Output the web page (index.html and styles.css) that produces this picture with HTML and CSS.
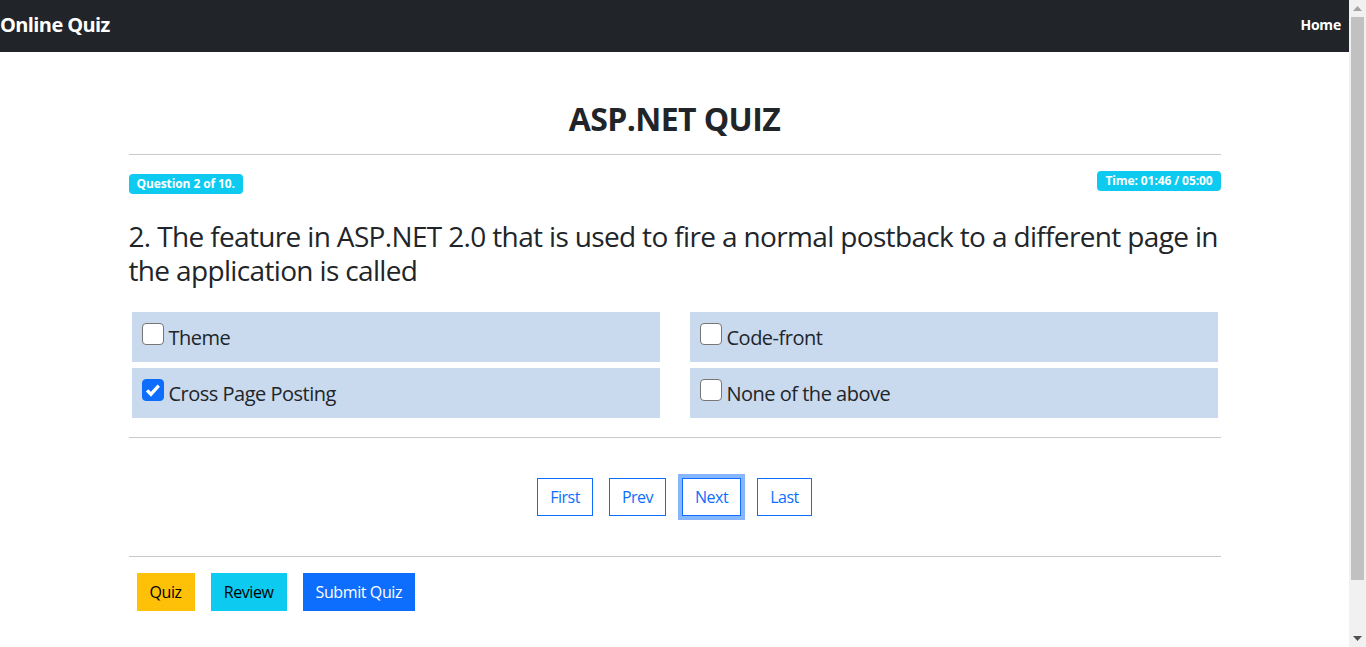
FILE: index.html
```html
<!DOCTYPE html>
<html lang="en">
<head>
<meta charset="utf-8">
<title>Online Quiz</title>
<link rel="stylesheet" href="styles.css">
</head>
<body>
<div class="page">
  <nav class="navbar">
    <a class="brand" href="#">Online Quiz</a>
    <a class="nav-link" href="#">Home</a>
  </nav>
  <main class="container">
    <h2 class="title">ASP.NET QUIZ</h2>
    <hr class="rule rule-title">
    <div class="meta">
      <span class="badge badge-q">Question 2 of 10.</span>
      <span class="badge badge-time">Time: 01:46 / 05:00</span>
    </div>
    <h3 class="question">2. The feature in ASP.NET 2.0 that is used to fire a normal postback to a different page in the application is called</h3>
    <div class="options">
      <label class="option"><input type="checkbox" class="chk">Theme</label>
      <label class="option"><input type="checkbox" class="chk">Code-front</label>
      <label class="option"><input type="checkbox" class="chk" checked>Cross Page Posting</label>
      <label class="option"><input type="checkbox" class="chk">None of the above</label>
    </div>
    <hr class="rule rule-options">
    <div class="pager">
      <button class="pbtn">First</button>
      <button class="pbtn">Prev</button>
      <button class="pbtn focused">Next</button>
      <button class="pbtn">Last</button>
    </div>
    <hr class="rule rule-pager">
    <div class="actions">
      <button class="abtn warn">Quiz</button>
      <button class="abtn info">Review</button>
      <button class="abtn primary">Submit Quiz</button>
    </div>
  </main>
</div>
<div class="scrollbar" aria-hidden="true">
  <div class="sb-arrow sb-up"><svg width="9" height="5" viewBox="0 0 9 5"><path d="M0 5 L4.5 0 L9 5 Z" fill="#a3a3a3"/></svg></div>
  <div class="sb-track"><div class="sb-thumb"></div></div>
  <div class="sb-arrow sb-down"><svg width="9" height="5" viewBox="0 0 9 5"><path d="M0 0 L4.5 5 L9 0 Z" fill="#505050"/></svg></div>
</div>
</body>
</html>
```

FILE: styles.css
```css
* { box-sizing: border-box; }
html, body { margin: 0; padding: 0; }
body {
  font-family: "Open Sans", "Noto Sans", sans-serif;
  color: #212529;
  background: #fff;
  font-size: 16px;
}
.page {
  width: calc(100% - 17px);
}
.navbar {
  height: 52px;
  background: #212529;
  display: flex;
  align-items: center;
  justify-content: space-between;
  padding: 0 8px 3px 0;
}
.brand {
  color: #fff;
  text-decoration: none;
  font-weight: 700;
  font-size: 20px;
  line-height: 30px;
  letter-spacing: -0.6px;
}
.nav-link {
  color: #fff;
  text-decoration: none;
  font-weight: 700;
  font-size: 14px;
  line-height: 21px;
  letter-spacing: -0.2px;
}
.container {
  width: 1092px;
  margin: 0 auto;
  padding-bottom: 90px;
}
.title {
  margin: 48px 0 0;
  text-align: center;
  font-size: 32px;
  line-height: 38px;
  font-weight: 700;
  letter-spacing: -0.6px;
}
.rule {
  border: 0;
  border-top: 1px solid #c8c9ca;
  margin: 0;
  height: 0;
}
.rule-title { margin-top: 16px; }
.meta {
  display: flex;
  justify-content: space-between;
  align-items: flex-start;
  margin-top: 16px;
}
.badge {
  display: inline-block;
  background: #0dcaf0;
  color: #fff;
  font-weight: 700;
  font-size: 12px;
  line-height: 12px;
  padding: 4px 8px;
  border-radius: 4px;
  letter-spacing: -0.1px;
}
.badge-q { margin-top: 3px; }
.question {
  margin: 26px 0 0;
  font-size: 28px;
  line-height: 33.6px;
  font-weight: 400;
  letter-spacing: -0.65px;
}
.options {
  display: grid;
  grid-template-columns: 1fr 1fr;
  column-gap: 30px;
  row-gap: 6px;
  padding: 3px;
  margin-top: 22px;
}
.option {
  background: #c9d9ee;
  height: 50px;
  padding: 11px 10px 9px;
  font-size: 20px;
  line-height: 30px;
  letter-spacing: -0.5px;
  white-space: nowrap;
}
.chk {
  -webkit-appearance: none;
  appearance: none;
  display: inline-block;
  width: 22px;
  height: 22px;
  margin: 0 5px 0 0;
  border: 1px solid #767676;
  border-radius: 4px;
  background: #fff;
  vertical-align: baseline;
}
.chk:checked {
  background-color: #0d6efd;
  border-color: #0d6efd;
  background-image: url("data:image/svg+xml,%3csvg xmlns='http://www.w3.org/2000/svg' viewBox='0 0 22 22'%3e%3cpath fill='none' stroke='%23fff' stroke-width='3.6' d='M4.5 11.5l4.2 4.2 8.6-9.6'/%3e%3c/svg%3e");
  background-size: 100% 100%;
}
.rule-options { margin-top: 16px; }
.pager {
  display: flex;
  justify-content: center;
  gap: 16px;
  margin-top: 40px;
}
.pbtn {
  font-family: inherit;
  font-size: 16px;
  line-height: 24px;
  padding: 6px 12px;
  border: 1px solid #0d6efd;
  color: #0d6efd;
  background: #fff;
  border-radius: 0;
  letter-spacing: -0.5px;
}
.pbtn.focused {
  box-shadow: 0 0 0 4px #86b7fe;
}
.rule-pager { margin-top: 40px; }
.actions {
  display: flex;
  gap: 16px;
  padding-left: 8px;
  margin-top: 16px;
}
.abtn {
  font-family: inherit;
  font-size: 16px;
  line-height: 24px;
  padding: 6px 12px;
  border: 1px solid transparent;
  border-radius: 0;
  color: #000;
  letter-spacing: -0.4px;
}
.abtn.warn { background: #ffc107; border-color: #ffc107; }
.abtn.info { background: #0dcaf0; border-color: #0dcaf0; }
.abtn.primary { background: #0d6efd; border-color: #0d6efd; color: #fff; }

.scrollbar {
  position: fixed;
  top: 0;
  right: 0;
  width: 17px;
  height: 100vh;
  background: #f1f1f1;
  display: flex;
  flex-direction: column;
}
.sb-arrow {
  height: 17px;
  display: flex;
  align-items: center;
  justify-content: center;
  flex: none;
}
.sb-track {
  flex: 1;
  padding: 0 2px 0 2px;
}
.sb-thumb {
  height: 563px;
  background: #c1c1c1;
}
```
